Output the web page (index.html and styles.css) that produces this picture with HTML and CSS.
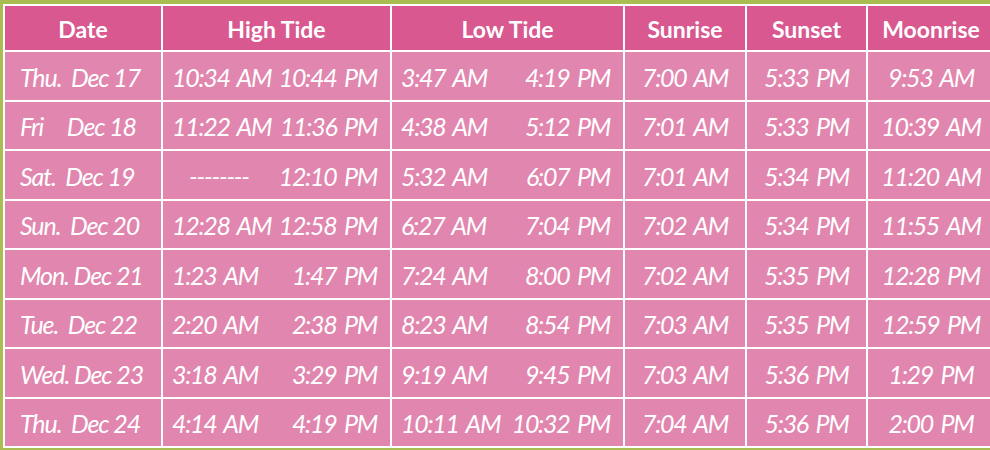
FILE: index.html
```html
<!DOCTYPE html>
<html>
<head>
<meta charset="utf-8">
<link rel="stylesheet" href="styles.css">
</head>
<body>
<div class="table">
  <div class="th">Date</div>
  <div class="th">High Tide</div>
  <div class="th">Low Tide</div>
  <div class="th">Sunrise</div>
  <div class="th">Sunset</div>
  <div class="th">Moonrise</div>

  <div class="td date">Thu.&nbsp; Dec 17</div>
  <div class="td pair"><span>10:34 AM</span><span>10:44 PM</span></div>
  <div class="td pair"><span>3:47 AM</span><span>4:19 PM</span></div>
  <div class="td c">7:00 AM</div>
  <div class="td c">5:33 PM</div>
  <div class="td c">9:53 AM</div>

  <div class="td date">Fri&nbsp;&nbsp;&nbsp;&nbsp; Dec 18</div>
  <div class="td pair"><span>11:22 AM</span><span>11:36 PM</span></div>
  <div class="td pair"><span>4:38 AM</span><span>5:12 PM</span></div>
  <div class="td c">7:01 AM</div>
  <div class="td c">5:33 PM</div>
  <div class="td c">10:39 AM</div>

  <div class="td date">Sat.&nbsp; Dec 19</div>
  <div class="td pair"><span class="dash">--------</span><span>12:10 PM</span></div>
  <div class="td pair"><span>5:32 AM</span><span>6:07 PM</span></div>
  <div class="td c">7:01 AM</div>
  <div class="td c">5:34 PM</div>
  <div class="td c">11:20 AM</div>

  <div class="td date">Sun.&nbsp; Dec 20</div>
  <div class="td pair"><span>12:28 AM</span><span>12:58 PM</span></div>
  <div class="td pair"><span>6:27 AM</span><span>7:04 PM</span></div>
  <div class="td c">7:02 AM</div>
  <div class="td c">5:34 PM</div>
  <div class="td c">11:55 AM</div>

  <div class="td date">Mon. Dec 21</div>
  <div class="td pair"><span>1:23 AM</span><span>1:47 PM</span></div>
  <div class="td pair"><span>7:24 AM</span><span>8:00 PM</span></div>
  <div class="td c">7:02 AM</div>
  <div class="td c">5:35 PM</div>
  <div class="td c">12:28 PM</div>

  <div class="td date">Tue.&nbsp; Dec 22</div>
  <div class="td pair"><span>2:20 AM</span><span>2:38 PM</span></div>
  <div class="td pair"><span>8:23 AM</span><span>8:54 PM</span></div>
  <div class="td c">7:03 AM</div>
  <div class="td c">5:35 PM</div>
  <div class="td c">12:59 PM</div>

  <div class="td date">Wed. Dec 23</div>
  <div class="td pair"><span>3:18 AM</span><span>3:29 PM</span></div>
  <div class="td pair"><span>9:19 AM</span><span>9:45 PM</span></div>
  <div class="td c">7:03 AM</div>
  <div class="td c">5:36 PM</div>
  <div class="td c">1:29 PM</div>

  <div class="td date">Thu.&nbsp; Dec 24</div>
  <div class="td pair"><span>4:14 AM</span><span>4:19 PM</span></div>
  <div class="td pair"><span>10:11 AM</span><span>10:32 PM</span></div>
  <div class="td c">7:04 AM</div>
  <div class="td c">5:36 PM</div>
  <div class="td c">2:00 PM</div>
</div>
</body>
</html>
```
FILE: styles.css
```css
html, body {
  margin: 0;
  padding: 0;
  background: #a9bd50;
  overflow: hidden;
  width: 990px;
  height: 450px;
}
.table {
  display: grid;
  grid-template-columns: 156px 227px 231px 120px 119px 126px;
  grid-template-rows: 44px repeat(8, 47.5px);
  gap: 2px;
  padding: 2px;
  background: #ffffff;
  margin: 4px 0 0 3px;
  width: max-content;
}
.th {
  background: #d9588f;
  color: #fff;
  font-family: "Lato", "DejaVu Sans", sans-serif;
  font-weight: 700;
  font-size: 23px;
  display: flex;
  align-items: center;
  justify-content: center;
  padding-top: 1px;
}
.td {
  background: #e186ae;
  color: #fff;
  font-family: "Lato", "DejaVu Sans", sans-serif;
  font-style: italic;
  font-weight: 400;
  font-size: 25px;
  letter-spacing: -1.1px;
  display: flex;
  align-items: center;
  white-space: pre;
  padding-top: 2px;
}
.date {
  padding-left: 15px;
}
.pair,
.c {
  letter-spacing: -1.3px;
  word-spacing: 3px;
}
.pair {
  justify-content: space-between;
  padding-left: 9px;
  padding-right: 13px;
}
.c {
  justify-content: center;
}
.dash {
  margin-left: 17px;
}
```
